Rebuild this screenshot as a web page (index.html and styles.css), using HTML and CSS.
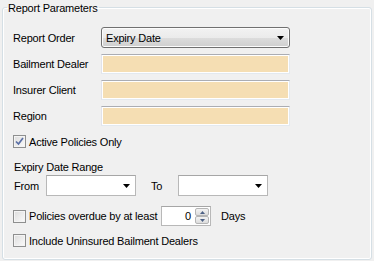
FILE: index.html
```html
<!DOCTYPE html>
<html lang="en">

<head>
    <meta charset="UTF-8">
    <title>Report Parameters</title>
    <link rel="stylesheet" href="styles.css">
</head>

<body>

    <fieldset class="group">
        <legend>Report Parameters</legend>

        <div class="fields">
            <label class="field-label">Report Order</label>
            <div class="combo combo-button">
                <span>Expiry Date</span>
                <svg class="arrow" width="7" height="4" viewBox="0 0 7 4"><polygon points="0,0 7,0 3.5,4" fill="#000"/></svg>
            </div>

            <label class="field-label">Bailment Dealer</label>
            <div class="textbox"></div>

            <label class="field-label">Insurer Client</label>
            <div class="textbox"></div>

            <label class="field-label">Region</label>
            <div class="textbox"></div>
        </div>

        <div class="check-row active-row">
            <span class="checkbox checked">
                <svg width="9" height="9" viewBox="0 0 9 9"><path d="M1 4.5 L3.5 7 L8 1" fill="none" stroke="#5a6fa6" stroke-width="1.7"/></svg>
            </span>
            <span>Active Policies Only</span>
        </div>

        <div class="section-title">Expiry Date Range</div>

        <div class="range-row">
            <span class="from-label">From</span>
            <div class="combo date-combo">
                <svg class="arrow" width="7" height="4" viewBox="0 0 7 4"><polygon points="0,0 7,0 3.5,4" fill="#000"/></svg>
            </div>
            <span class="to-label">To</span>
            <div class="combo date-combo">
                <svg class="arrow" width="7" height="4" viewBox="0 0 7 4"><polygon points="0,0 7,0 3.5,4" fill="#000"/></svg>
            </div>
        </div>

        <div class="check-row overdue-row">
            <span class="checkbox"></span>
            <span class="overdue-text">Policies overdue by at least</span>
            <div class="spinner">
                <span class="spinner-value">0</span>
                <div class="spinner-buttons">
                    <div class="spin-btn"><svg width="5" height="3" viewBox="0 0 5 3"><polygon points="0,3 5,3 2.5,0" fill="#4d6185"/></svg></div>
                    <div class="spin-btn"><svg width="5" height="3" viewBox="0 0 5 3"><polygon points="0,0 5,0 2.5,3" fill="#4d6185"/></svg></div>
                </div>
            </div>
            <span class="days">Days</span>
        </div>

        <div class="check-row include-row">
            <span class="checkbox"></span>
            <span>Include Uninsured Bailment Dealers</span>
        </div>
    </fieldset>

</body>

</html>
```

FILE: styles.css
```css
body {
    margin: 0;
    padding: 0;
    background-color: #f0f0f0;
    font-family: 'Liberation Sans', Arial, sans-serif;
    font-size: 11px;
    letter-spacing: -0.2px;
    color: #000;
}

.group {
    box-sizing: border-box;
    width: 370px;
    height: 260px;
    margin: 0 0 0 2px;
    padding: 0 10px;
    border: 1px solid #d5dfe5;
    border-radius: 3px;
    box-shadow: inset 0 0 0 1px #fff;
}

.group legend {
    margin-left: -6px;
    padding: 1px 1px 0;
    line-height: 14px;
}

.fields {
    display: grid;
    grid-template-columns: 88px 189px;
    row-gap: 6px;
    align-items: center;
    margin-top: 12px;
}

.field-label {
    line-height: 14px;
}

.combo {
    box-sizing: border-box;
    display: flex;
    align-items: center;
    justify-content: space-between;
    height: 21px;
}

.combo-button {
    padding: 0 4px 0 4px;
    border: 1px solid #707070;
    border-radius: 3px;
    background: linear-gradient(#f2f2f2 0%, #ebebeb 50%, #dddddd 51%, #cfcfcf 100%);
    box-shadow: inset 0 0 0 1px #fcfcfc;
}

.combo-button .arrow {
    margin-right: 1px;
}

.textbox {
    box-sizing: border-box;
    height: 20px;
    background-color: #f5deb3;
    border: 1px solid #e3e9ef;
    border-top-color: #abadb3;
    border-left-color: #e2e3ea;
    box-shadow: inset 0 0 0 1px #fff;
}

.check-row {
    display: flex;
    align-items: center;
    white-space: nowrap;
}

.checkbox {
    box-sizing: border-box;
    display: flex;
    flex-shrink: 0;
    align-items: center;
    justify-content: center;
    width: 13px;
    height: 13px;
    margin-right: 3px;
    border: 1px solid #8e8f8f;
    background: linear-gradient(135deg, #dcdcdc, #fbfbfb);
    box-shadow: inset 0 0 0 1px #f4f4f4;
}

.active-row {
    height: 13px;
    margin-top: 9px;
}

.section-title {
    margin-top: 12px;
    line-height: 14px;
    padding-left: 1px;
}

.range-row {
    display: flex;
    align-items: center;
    height: 21px;
    margin-top: 1px;
}

.from-label {
    width: 33px;
    padding-left: 1px;
    box-sizing: border-box;
}

.to-label {
    width: 27px;
    margin-left: 15px;
}

.date-combo {
    width: 90px;
    justify-content: flex-end;
    padding-right: 5px;
    background-color: #fff;
    border: 1px solid #b8b8b8;
    border-top-color: #a6a6a6;
}

.overdue-row {
    height: 20px;
    margin-top: 10px;
}

.overdue-text {
    width: 132px;
    flex-shrink: 0;
}

.spinner {
    box-sizing: border-box;
    display: flex;
    align-items: center;
    width: 50px;
    height: 20px;
    padding: 1px;
    background-color: #fff;
    border: 1px solid #b8b8b8;
    border-top-color: #a6a6a6;
}

.spinner-value {
    flex: 1;
    text-align: right;
    padding-right: 4px;
}

.spinner-buttons {
    display: flex;
    flex-direction: column;
}

.spin-btn {
    box-sizing: border-box;
    display: flex;
    align-items: center;
    justify-content: center;
    width: 14px;
    height: 8px;
    border: 1px solid #b5b5b5;
    border-radius: 2px;
    background: linear-gradient(#f3f3f3, #dcdcdc);
}

.days {
    margin-left: 10px;
}

.include-row {
    height: 13px;
    margin-top: 8px;
}
```
